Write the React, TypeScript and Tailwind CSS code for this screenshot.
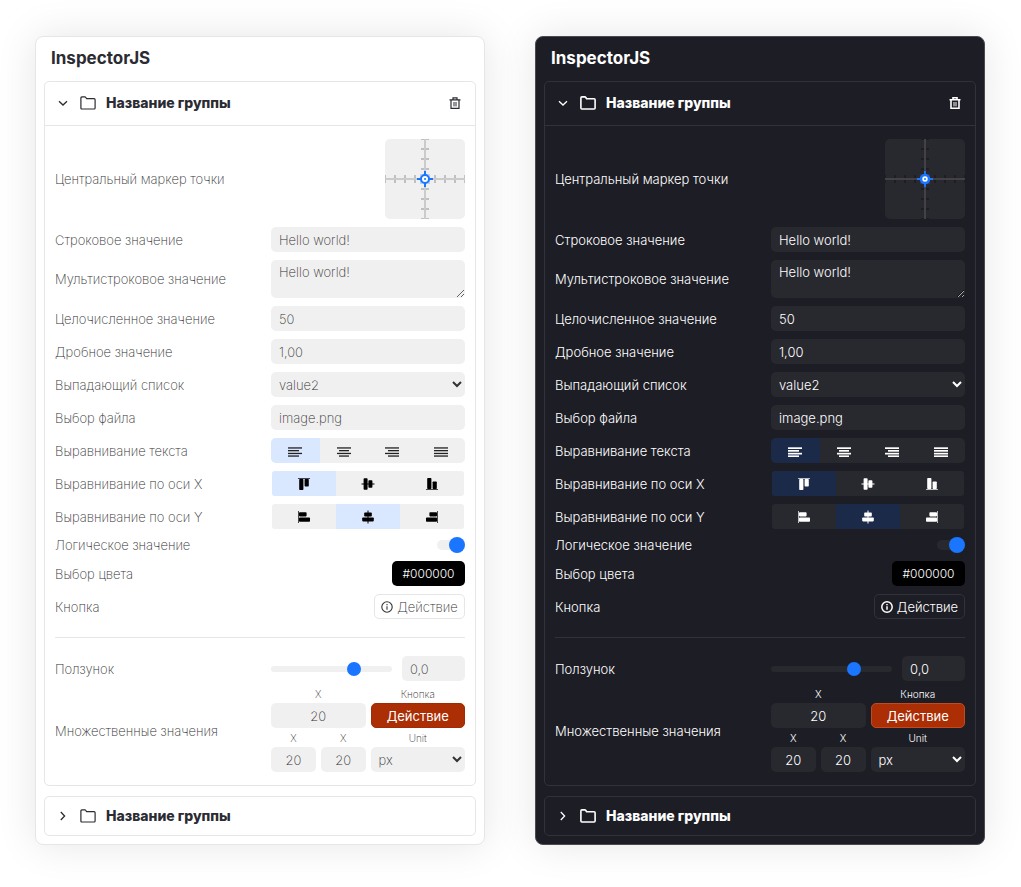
import { createContext, useContext, useId, useState } from "react";
import type { ReactNode } from "react";
import clsx from "clsx";

const DarkContext = createContext(false);
const useDark = () => useContext(DarkContext);

function useField() {
  const dark = useDark();
  return clsx(
    "block h-[25px] w-full min-w-0 rounded-[5px] outline-none focus:ring-1 focus:ring-[#1a75ff]",
    dark ? "bg-[#28282f] text-white" : "bg-[#f0f0f0] text-[#333]"
  );
}

function ChevronIcon({ open }: { open: boolean }) {
  return (
    <svg viewBox="0 0 14 14" className="size-3.5 shrink-0" fill="none" stroke="currentColor" strokeWidth="1.3">
      {open ? <path d="M3 5.2l4 3.8 4-3.8" /> : <path d="M4.8 3l3.8 4-3.8 4" />}
    </svg>
  );
}

function FolderIcon() {
  const dark = useDark();
  return (
    <svg viewBox="0 0 16 14" className="h-3.5 w-4 shrink-0" fill="none" stroke="currentColor" strokeWidth={dark ? 1.6 : 1.2} strokeLinejoin="round">
      <path d="M.9 12V1.9Q.9.9 1.9.9H4.8Q5.4.9 5.8 1.5L6.6 2.7H14.1Q15.1 2.7 15.1 3.7V12Q15.1 13 14.1 13H1.9Q.9 13 .9 12Z" />
    </svg>
  );
}

function TrashIcon() {
  const dark = useDark();
  return (
    <svg viewBox="0 0 12 12" className="size-3" fill="none" stroke="currentColor" strokeWidth={dark ? 1.6 : 1.2}>
      <path d="M.5 2.8h11M4 2.6V.8h4v1.8M2 3v8.3h8V3" />
      <path d="M5 5v4.4M7 5v4.4" strokeWidth="1" />
    </svg>
  );
}

function InfoIcon() {
  const dark = useDark();
  return (
    <svg viewBox="0 0 12 12" className="size-3 shrink-0" fill="none" stroke="currentColor" strokeWidth={dark ? 1.5 : 1.1}>
      <circle cx="6" cy="6" r="5.2" />
      <path d="M6 5.2v3.6M6 3v1.2" />
    </svg>
  );
}

const textLines: Record<string, [number, number][]> = {
  left: [[0, 14], [0, 11], [0, 14], [0, 11]],
  center: [[0, 14], [2, 10], [0, 14], [2, 10]],
  right: [[0, 14], [3, 11], [0, 14], [3, 11]],
  justify: [[0, 14], [0, 14], [0, 14], [0, 14]],
};
const lineTops = [0.3, 3, 5.8, 8.4];

function TextAlignIcon({ kind }: { kind: string }) {
  const dark = useDark();
  return (
    <svg viewBox="0 0 14 10" className="mt-0.5 h-2.5 w-3.5" fill="currentColor">
      {textLines[kind].map(([x, w], i) => (
        <rect key={i} x={x} y={lineTops[i]} width={w} height={dark ? 1.7 : 1.3} />
      ))}
    </svg>
  );
}

function AxisIcon({ kind, vertical }: { kind: string; vertical?: boolean }) {
  return (
    <svg viewBox="0 0 14 14" className="size-3.5" fill="currentColor">
      <g transform={vertical ? "matrix(0 -1 1 0 0 14)" : undefined}>
        {kind === "start" && (
          <>
            <rect x="1" y="1" width="12" height="1" opacity=".7" />
            <rect x="2.2" y="2" width="4.2" height="11" rx=".8" />
            <rect x="7.6" y="2" width="4.2" height="7.6" rx=".8" />
          </>
        )}
        {kind === "center" && (
          <>
            <rect x=".5" y="6.5" width="13" height="1" />
            <rect x="2.6" y="1.2" width="4" height="11.6" rx=".8" />
            <rect x="7.4" y="3.2" width="4" height="7.6" rx=".8" />
          </>
        )}
        {kind === "end" && (
          <>
            <rect x="1" y="12" width="12" height="1" opacity=".7" />
            <rect x="2.2" y="1" width="4.2" height="11" rx=".8" />
            <rect x="7.6" y="4.4" width="4.2" height="7.6" rx=".8" />
          </>
        )}
      </g>
    </svg>
  );
}

function PointMarker() {
  const dark = useDark();
  const ticks = [0, 10, 20, 30, 50, 60, 70, 80];
  return (
    <svg viewBox="0 0 80 80" className={clsx("size-20 rounded-[5px]", dark ? "bg-[#28282f]" : "bg-[#f0f0f0]")}>
      <g stroke={dark ? "#1e1e22" : "#c0c0c0"} strokeWidth="2">
        {ticks.map((t) => (
          <path key={t} d={`M36 ${t}h8M${t} 36v8`} />
        ))}
      </g>
      <path d="M40 0v80M0 40h80" stroke={dark ? "#424246" : "#cbcbcb"} strokeWidth="2" />
      <rect x="35" y="35" width="10" height="10" fill="#1a75ff" opacity=".25" />
      <path d="M40 32v16M32 40h16" stroke="#1a75ff" strokeWidth="2" />
      <circle cx="40" cy="40" r="4" fill="#fff" stroke="#1a75ff" strokeWidth={dark ? 2.6 : 2} />
      <circle cx="40" cy="40" r="1" fill="#1a75ff" />
    </svg>
  );
}

function Row({ label, id, children }: { label: string; id?: string; children: ReactNode }) {
  return (
    <div className="grid grid-cols-[216fr_194fr] items-center leading-4">
      {id ? <label htmlFor={id}>{label}</label> : <span>{label}</span>}
      <div className="flex min-w-0 justify-end">{children}</div>
    </div>
  );
}

function Segments({ label, items, initial, inset }: { label: string; items: ReactNode[]; initial: number; inset?: boolean }) {
  const dark = useDark();
  const [selected, setSelected] = useState(initial);
  return (
    <div className={clsx("w-full", inset && "px-px")}>
      <div
        role="group"
        aria-label={label}
        className={clsx("flex h-[25px] overflow-hidden", inset ? "rounded-[3px]" : "rounded-[5px]", dark ? "bg-[#28282f]" : "bg-[#f0f0f0]")}
      >
        {items.map((item, i) => (
          <button
            key={i}
            type="button"
            aria-pressed={selected === i}
            onClick={() => setSelected(i)}
            className={clsx(
              "flex flex-1 items-center justify-center",
              dark ? "text-white" : inset ? "text-black" : "text-[#222]",
              selected === i && (dark ? "bg-[#1c2a49]" : "bg-[#dae8ff]")
            )}
          >
            {item}
          </button>
        ))}
      </div>
    </div>
  );
}

function Small({ label, id, wide, children }: { label: string; id: string; wide?: boolean; children: ReactNode }) {
  return (
    <div className={clsx("min-w-0", wide && "col-span-2")}>
      <label htmlFor={id} className="block h-3.5 text-center text-[10px] leading-[10px]">
        {label}
      </label>
      {children}
    </div>
  );
}

function Group({ open, children }: { open: boolean; children?: ReactNode }) {
  const dark = useDark();
  const line = dark ? "border-[#32323a]" : "border-[#e6e6e8]";
  return (
    <section className={clsx("rounded-[5px] border", line)}>
      <header
        className={clsx(
          "flex items-center justify-between pr-3.5 pl-[11px]",
          open ? "h-11 border-b pb-0.5" : "h-[38px]",
          line,
          dark ? "text-white" : "text-[#2b2b33]"
        )}
      >
        <button type="button" aria-expanded={open} className="flex items-center">
          <ChevronIcon open={open} />
          <span className="ml-2.5 flex">
            <FolderIcon />
          </span>
          <span className="ml-2.5 text-sm leading-5 font-extrabold">Название группы</span>
        </button>
        {open && (
          <button type="button" aria-label="Удалить группу">
            <TrashIcon />
          </button>
        )}
      </header>
      {open && <div className="flex flex-col gap-2 px-2.5 py-[13px]">{children}</div>}
    </section>
  );
}

function Fields() {
  const dark = useDark();
  const field = useField();
  const id = useId();
  const border = dark ? "border-[#32323a]" : "border-[#e6e6e8]";
  const danger = clsx(
    "h-[25px] w-full rounded-[5px] border bg-[#ab2e05] font-normal text-white",
    dark ? "border-[#c04a22]" : "border-[#a02b05]"
  );
  const plainNumber = "[appearance:textfield] [&::-webkit-inner-spin-button]:appearance-none";
  const number = clsx(field, plainNumber, "px-2 text-center");
  return (
    <>
      <Row label="Центральный маркер точки">
        <PointMarker />
      </Row>
      <Row label="Строковое значение" id={id + "s"}>
        <input id={id + "s"} type="text" defaultValue="Hello world!" className={clsx(field, "px-2")} />
      </Row>
      <Row label="Мультистроковое значение" id={id + "m"}>
        <textarea
          id={id + "m"}
          defaultValue="Hello world!"
          className={clsx(field, "h-[38px] resize px-2 py-0.5 leading-5")}
        />
      </Row>
      <Row label="Целочисленное значение" id={id + "i"}>
        <input id={id + "i"} type="number" defaultValue={50} className={clsx(field, plainNumber, "px-2")} />
      </Row>
      <Row label="Дробное значение" id={id + "f"}>
        <input id={id + "f"} type="text" inputMode="decimal" defaultValue="1,00" className={clsx(field, "px-2")} />
      </Row>
      <Row label="Выпадающий список" id={id + "l"}>
        <select id={id + "l"} defaultValue="value2" className={clsx(field, "pl-1")}>
          <option>value1</option>
          <option>value2</option>
          <option>value3</option>
        </select>
      </Row>
      <Row label="Выбор файла" id={id + "file"}>
        <button id={id + "file"} type="button" className={clsx(field, "px-2 text-left")}>
          image.png
        </button>
      </Row>
      <Row label="Выравнивание текста">
        <Segments
          label="Выравнивание текста"
          initial={0}
          items={["left", "center", "right", "justify"].map((kind) => (
            <TextAlignIcon key={kind} kind={kind} />
          ))}
        />
      </Row>
      <Row label="Выравнивание по оси X">
        <Segments
          inset
          label="Выравнивание по оси X"
          initial={0}
          items={["start", "center", "end"].map((kind) => (
            <AxisIcon key={kind} kind={kind} />
          ))}
        />
      </Row>
      <Row label="Выравнивание по оси Y">
        <Segments
          inset
          label="Выравнивание по оси Y"
          initial={1}
          items={["start", "center", "end"].map((kind) => (
            <AxisIcon key={kind} kind={kind} vertical />
          ))}
        />
      </Row>
      <Row label="Логическое значение" id={id + "b"}>
        <input
          id={id + "b"}
          type="checkbox"
          defaultChecked
          className={clsx(
            "flex h-4 w-7 appearance-none items-center before:h-2.5 before:w-full before:shrink-0 before:rounded-full after:-ml-7 after:size-4 after:shrink-0 after:rounded-full after:bg-[#888] checked:after:-ml-4 checked:after:bg-[#1a75ff]",
            dark ? "before:bg-[#28282f]" : "before:bg-[#f0f0f0]"
          )}
        />
      </Row>
      <Row label="Выбор цвета" id={id + "c"}>
        <button id={id + "c"} type="button" className="h-[25px] w-[73px] rounded-[5px] bg-black text-xs font-light text-white">
          #000000
        </button>
      </Row>
      <Row label="Кнопка" id={id + "a"}>
        <button
          id={id + "a"}
          type="button"
          className={clsx("flex h-[25px] w-[91px] items-center justify-center gap-1 rounded-[5px] border", border)}
        >
          <InfoIcon />
          Действие
        </button>
      </Row>
      <hr className={clsx("my-2.5", border)} />
      <Row label="Ползунок" id={id + "r"}>
        <div className="flex w-full items-center gap-2.5">
          <input
            id={id + "r"}
            type="range"
            defaultValue={71}
            className={clsx(
              "h-1.5 min-w-0 flex-1 appearance-none rounded-full [&::-webkit-slider-thumb]:size-3.5 [&::-webkit-slider-thumb]:appearance-none [&::-webkit-slider-thumb]:rounded-full [&::-webkit-slider-thumb]:bg-[#1a75ff]",
              dark ? "bg-[#28282f]" : "bg-[#f0f0f0]"
            )}
          />
          <div className="w-[63px]">
            <input aria-label="Значение ползунка" type="text" inputMode="decimal" defaultValue="0,0" className={clsx(field, "px-2")} />
          </div>
        </div>
      </Row>
      <Row label="Множественные значения">
        <div className="grid w-full grid-cols-4 gap-[5px]">
          <Small label="X" id={id + "x1"} wide>
            <input id={id + "x1"} type="number" defaultValue={20} className={number} />
          </Small>
          <Small label="Кнопка" id={id + "k"} wide>
            <button id={id + "k"} type="button" className={danger}>
              Действие
            </button>
          </Small>
          <Small label="X" id={id + "x2"}>
            <input id={id + "x2"} type="number" defaultValue={20} className={number} />
          </Small>
          <Small label="X" id={id + "x3"}>
            <input id={id + "x3"} type="number" defaultValue={20} className={number} />
          </Small>
          <Small label="Unit" id={id + "u"} wide>
            <select id={id + "u"} defaultValue="px" className={clsx(field, "pl-1")}>
              <option>px</option>
              <option>em</option>
              <option>%</option>
            </select>
          </Small>
        </div>
      </Row>
    </>
  );
}

function Inspector({ dark }: { dark: boolean }) {
  return (
    <DarkContext.Provider value={dark}>
      <article
        className={clsx(
          "rounded-lg border px-2 pb-2 text-[13px] leading-5 shadow-[0_0_40px_rgba(0,0,0,0.1)]",
          dark ? "border-[#4a4a50] bg-[#1d1d25] font-light text-white" : "border-[#e6e6e8] bg-white font-extralight text-[#333]"
        )}
      >
        <h2 className={clsx("flex h-11 items-center pb-0.5 pl-[7px] text-[17px] font-bold", dark ? "text-white" : "text-[#2b2b33]")}>
          InspectorJS
        </h2>
        <div className="flex flex-col gap-2.5">
          <Group open>
            <Fields />
          </Group>
          <Group open={false} />
        </div>
      </article>
    </DarkContext.Provider>
  );
}

export default function App() {
  return (
    <main className="grid min-h-screen grid-cols-2 items-start gap-[50px] bg-white py-9 pr-9 pl-[35px] font-['Inter','Liberation_Sans',sans-serif]">
      <Inspector dark={false} />
      <Inspector dark />
    </main>
  );
}
